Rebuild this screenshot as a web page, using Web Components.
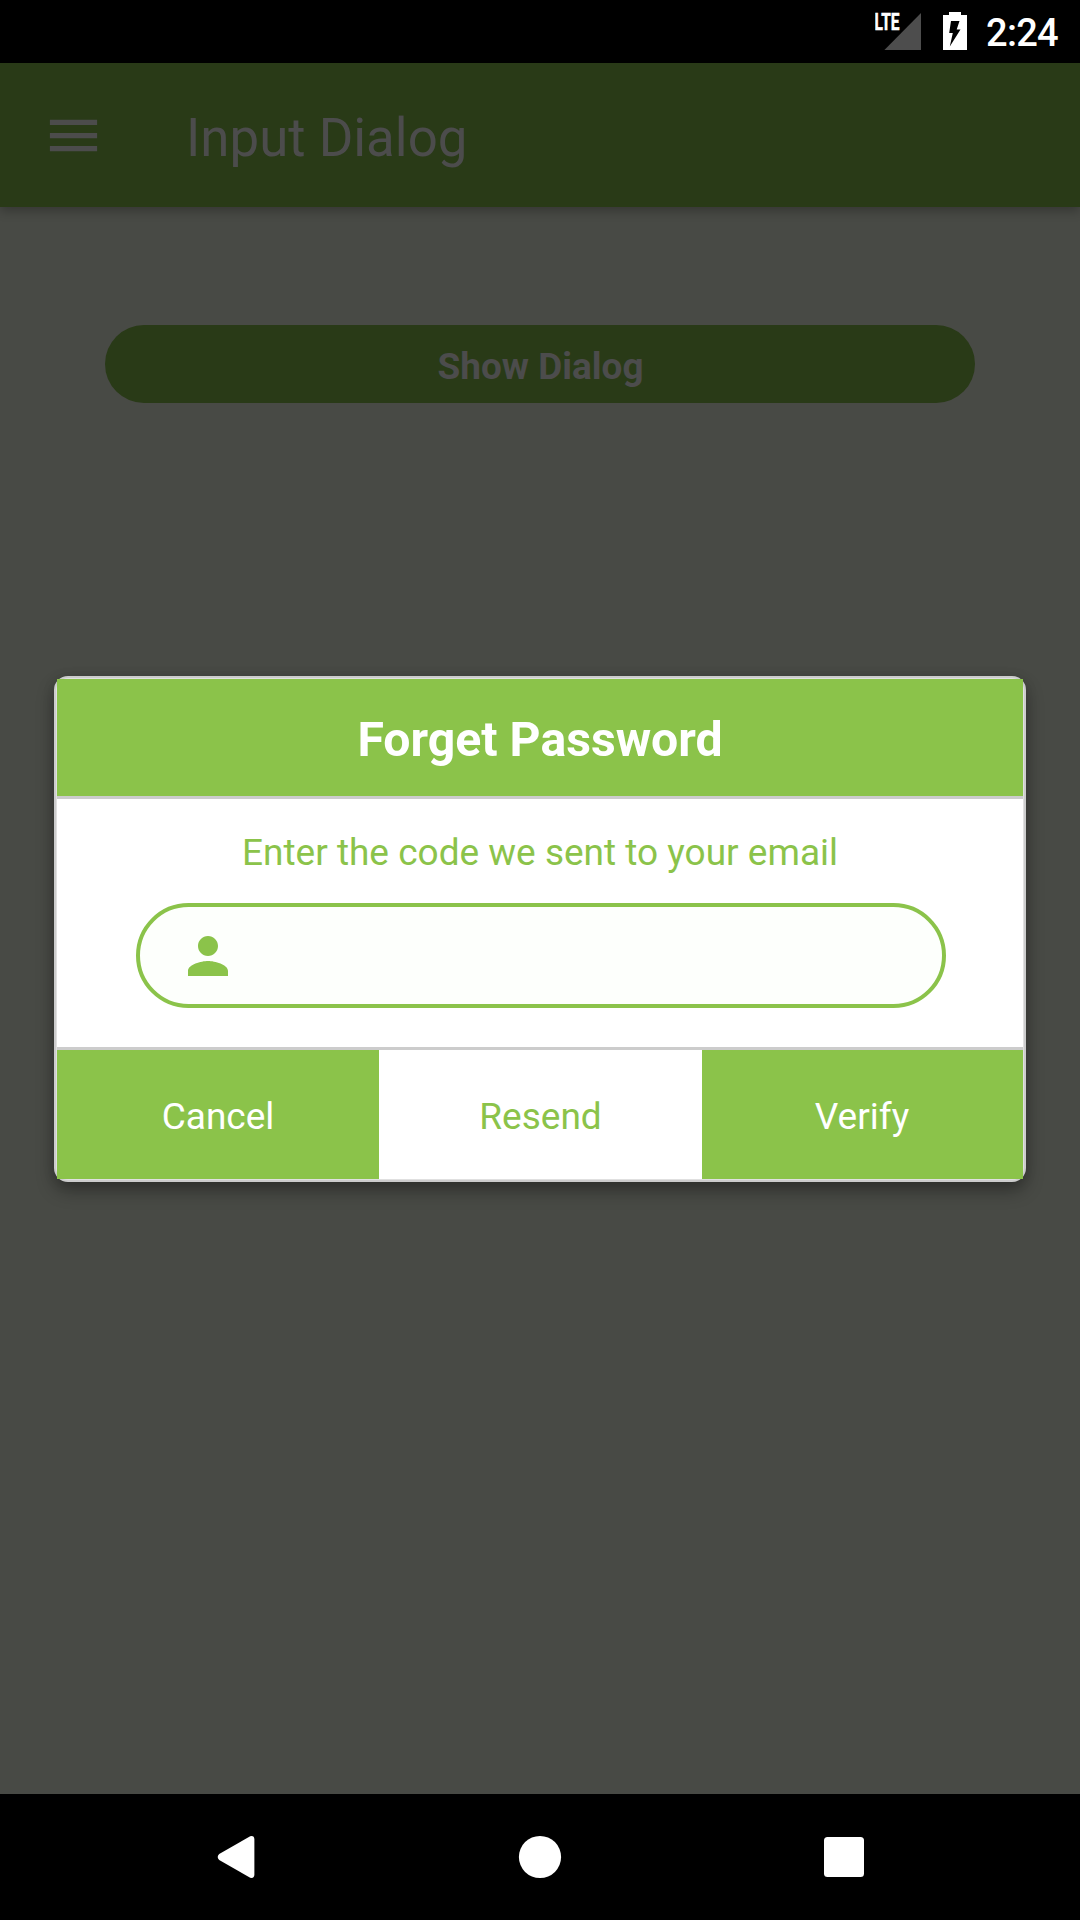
<!DOCTYPE html>
<html lang="en">
<head>
<meta charset="utf-8">
<title>Input Dialog</title>
<style>
html,body{margin:0;height:100%;background:#000}
body{font-family:Roboto,"Liberation Sans",sans-serif;--green:#8bc34a;--dim-green:#293a17;--dim-white:#4c4c4c;--line:#ccc}
</style>
</head>
<body>
<app-screen>
  <status-bar slot="top" time="2:24" network="LTE"></status-bar>
  <app-bar slot="top">Input Dialog</app-bar>
  <pill-button>Show Dialog</pill-button>
  <modal-dialog slot="overlay">
    <span slot="title">Forget Password</span>
    <span slot="message">Enter the code we sent to your email</span>
    <code-input slot="field"></code-input>
    <dialog-action slot="actions">Cancel</dialog-action>
    <dialog-action slot="actions" plain>Resend</dialog-action>
    <dialog-action slot="actions">Verify</dialog-action>
  </modal-dialog>
  <nav-bar slot="bottom"></nav-bar>
</app-screen>
<script>
const define = (name, html) => customElements.define(name, class extends HTMLElement {
  constructor() {
    super();
    this.attachShadow({ mode: 'open' }).innerHTML = html(this);
  }
});

define('app-screen', () => `
<style>
:host{display:flex;flex-direction:column;width:1080px;height:1920px;position:relative;overflow:hidden;background:#484a45}
main{flex:1;display:flex;flex-direction:column;padding:118px 105px 0}
.overlay{position:absolute;inset:676px 54px auto}
</style>
<slot name="top"></slot>
<main><slot></slot></main>
<slot name="bottom"></slot>
<div class="overlay"><slot name="overlay"></slot></div>`);

define('status-bar', el => `
<style>
:host{display:flex;justify-content:flex-end;height:63px;background:#000;color:#fff;box-sizing:border-box;padding-right:21px}
svg{display:block;flex:none}
.time{width:73px;font-size:38px;font-weight:500;letter-spacing:-.7px;line-height:67px;white-space:nowrap}
.signal{margin-right:22px}.battery{margin-right:19px}
</style>
<svg class="signal" width="46" height="63" viewBox="875 0 46 63">
  <path d="M921 13V50H884.4Z" fill="#4d4d4d"/>
  <text x="874.5" y="30" font-size="23" font-weight="700" fill="#fff" stroke="#fff" stroke-width=".5" textLength="25" lengthAdjust="spacingAndGlyphs">${el.getAttribute('network')}</text>
</svg>
<svg class="battery" width="24" height="63" viewBox="943 0 24 63">
  <path d="M943 15H949V12H961V15H967V50H943Z" fill="#fff"/>
  <path d="M951 21H959.5L956.7 29.5H960.5L949.8 46.5L952.8 33H949.2Z" fill="#000"/>
</svg>
<span class="time">${el.getAttribute('time')}</span>`);

define('app-bar', () => `
<style>
:host{display:flex;align-items:center;height:144px;background:var(--dim-green);color:var(--dim-white);box-shadow:0 4px 10px rgba(0,0,0,.26);box-sizing:border-box;padding-left:42px}
svg{display:block;margin-right:81px}
h1{margin:0;padding-top:6px;font-weight:400;font-size:52.8px;line-height:62px}
</style>
<svg width="63" height="63" viewBox="0 0 24 24"><path d="M3 18h18v-2H3v2zm0-5h18v-2H3v2zm0-7v2h18V6H3z" fill="currentColor"/></svg>
<h1><slot></slot></h1>`);

define('pill-button', () => `
<style>
:host{display:block}
button{display:block;width:100%;height:78px;border:0;margin:0;padding:5px 0 0 1px;border-radius:39px;background:var(--dim-green);color:var(--dim-white);font:700 37px Roboto,sans-serif;text-align:center}
</style>
<button><slot></slot></button>`);

define('modal-dialog', () => `
<style>
:host{display:block;box-sizing:border-box;height:506px;border:2px solid var(--line);border-radius:14px;padding:1px;background:#e0e0e0;box-shadow:0 9px 18px rgba(0,0,0,.3),0 2px 12px rgba(0,0,0,.13)}
h2{margin:0;height:117px;box-sizing:border-box;padding-top:5px;background:var(--green);color:#fff;font-size:48.2px;line-height:112px;font-weight:700;text-align:center}
section{height:248px;border-top:3px solid var(--line);border-bottom:3px solid var(--line);background:#fff}
p{margin:0;padding-top:29px;line-height:50px;font-size:37px;color:var(--green);text-align:center}
.field{padding:25px 77px 0 79px}
footer{display:grid;grid-template-columns:322px 323px 321px;height:129px}
</style>
<h2><slot name="title"></slot></h2>
<section><p><slot name="message"></slot></p><div class="field"><slot name="field"></slot></div></section>
<footer><slot name="actions"></slot></footer>`);

define('code-input', () => `
<style>
:host{display:flex;align-items:center;box-sizing:border-box;height:105px;border:4px solid var(--green);border-radius:53px;background:#fdfffc;padding-left:38px}
svg{display:block}
input{flex:1;min-width:0;height:80px;border:0;outline:0;background:transparent;font:37px Roboto,sans-serif;color:var(--green)}
</style>
<svg width="60" height="60" viewBox="0 0 24 24"><path d="M12 12c2.21 0 4-1.79 4-4s-1.79-4-4-4-4 1.79-4 4 1.79 4 4 4zm0 2c-2.67 0-8 1.34-8 4v2h16v-2c0-2.66-5.33-4-8-4z" fill="#8bc34a"/></svg>
<input type="text" aria-label="Code">`);

define('dialog-action', () => `
<style>
:host{display:flex;align-items:center;justify-content:center;box-sizing:border-box;padding-top:4px;background:var(--green);color:#fff;font-size:37px}
:host([plain]){background:#fff;color:var(--green)}
:host(:last-of-type){padding-right:1px}
</style>
<slot></slot>`);

define('nav-bar', () => `
<style>
:host{display:block;height:126px;background:#000}
svg{display:block}
</style>
<svg width="1080" height="126" viewBox="0 1794 1080 126" fill="#fff">
  <path d="M250.2 1836.2L219.2 1854Q216.2 1857 219.2 1860L250.2 1877.8Q254.4 1878.6 254.4 1874.5V1839.5Q254.4 1835.4 250.2 1836.2Z"/>
  <circle cx="540" cy="1857" r="21.1"/>
  <rect x="824" y="1837" width="40" height="40" rx="3.5"/>
</svg>`);
</script>
</body>
</html>
